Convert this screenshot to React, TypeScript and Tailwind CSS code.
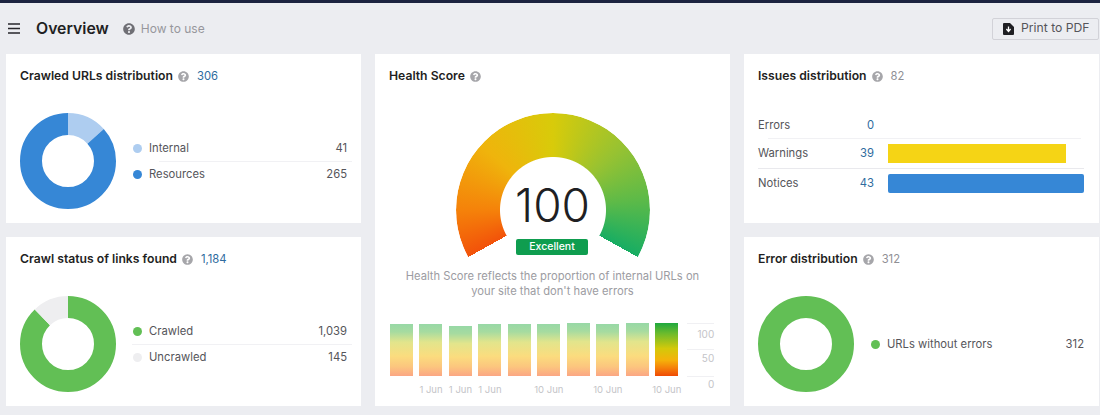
import { FaQuestionCircle } from 'react-icons/fa';

const font = "font-['Inter','Liberation_Sans',sans-serif]";

function Gauge() {
  return (
    <div className="h-[146px] w-[194px] overflow-hidden">
      <div className="h-[194px] w-[194px] rounded-full bg-[conic-gradient(from_241deg,#f2520a_0deg,#f5820a_29deg,#efb40c_71deg,#d8cb0a_119deg,#96c232_167deg,#5dba48_202deg,#17ad63_238deg,transparent_238deg)] [mask-image:radial-gradient(circle_closest-side,transparent_52.5px,black_53.5px)]" />
    </div>
  );
}

function Donut({ parts }: { parts: { color: string; value: number }[] }) {
  let offset = 0;
  return (
    <svg width="96" height="96" viewBox="0 0 96 96" className="shrink-0 -rotate-90">
      {parts.map((p) => {
        const el = (
          <circle
            key={p.color}
            cx="48"
            cy="48"
            r="37"
            fill="none"
            stroke={p.color}
            strokeWidth="22"
            pathLength={100}
            strokeDasharray={`${p.value} ${100 - p.value}`}
            strokeDashoffset={-offset}
          />
        );
        offset += p.value;
        return el;
      })}
    </svg>
  );
}

function Title({ text, count, blue }: { text: string; count?: string; blue?: boolean }) {
  return (
    <div className="flex h-4 items-center">
      <span className="text-[12.2px] font-semibold text-[#1f1f23]">{text}</span>
      <FaQuestionCircle className="ml-[5px] text-[11px] text-[#a6a6aa]" />
      {count && (
        <span className={`ml-[8px] text-[11.25px] ${blue ? 'text-[#2f6b9e]' : 'text-[#8f8f95]'}`}>{count}</span>
      )}
    </div>
  );
}

function LegendRow({ color, label, value, divider }: { color: string; label: string; value: string; divider?: string }) {
  return (
    <>
      <div className="flex h-[25px] items-center pr-[5px] text-[11.25px] text-[#55555a]">
        <span className={`ml-[1px] h-[9px] w-[9px] rounded-full ${color}`} />
        <span className="ml-[7px]">{label}</span>
        <span className="ml-auto">{value}</span>
      </div>
      {divider !== undefined && <div className={`h-px bg-[#f1f1f4] ${divider}`} />}
    </>
  );
}

function DonutCard({ children, title, parts }: { children: React.ReactNode; title: React.ReactNode; parts: { color: string; value: number }[] }) {
  return (
    <section className="h-[169px] bg-white pl-[14px] pr-[9px] pt-[14px]">
      {title}
      <div className="mt-[29px] flex items-center gap-[16px]">
        <Donut parts={parts} />
        <div className="flex-1">{children}</div>
      </div>
    </section>
  );
}

const bars = [
  { h: 'h-[52px]', label: '' },
  { h: 'h-[52px]', label: '1 Jun' },
  { h: 'h-[50px]', label: '1 Jun' },
  { h: 'h-[52px]', label: '1 Jun' },
  { h: 'h-[52px]', label: '' },
  { h: 'h-[52px]', label: '10 Jun' },
  { h: 'h-[53px]', label: '' },
  { h: 'h-[52px]', label: '10 Jun' },
  { h: 'h-[53px]', label: '' },
];

function ScoreChart() {
  const fade = 'bg-[linear-gradient(to_bottom,#97d8a6_0%,#a6dba0_15%,#e2e58c_35%,#fbdc7e_62%,#fcc67e_82%,#fba684_100%)]';
  return (
    <div className="mt-[24px] flex pl-[15px]">
      <div className="flex gap-[6.48px]">
        {bars.map((b, i) => (
          <div key={i} className="flex w-[23px] flex-col items-center">
            <div className="flex h-[53px] w-full items-end">
              <div className={`w-full ${b.h} ${fade}`} />
            </div>
            <span className="mt-[7px] h-[14px] whitespace-nowrap text-[9.5px] leading-[14px] text-[#c4c4c8]">{b.label}</span>
          </div>
        ))}
        <div className="flex w-[23px] flex-col items-center">
          <div className="h-[53px] w-full bg-[linear-gradient(to_bottom,#1fa83f_0%,#6dbb2c_20%,#d3c90a_48%,#f5b20a_70%,#f5800a_85%,#ef4a05_100%)]" />
          <span className="mt-[7px] h-[14px] whitespace-nowrap text-[9.5px] leading-[14px] text-[#c4c4c8]">10 Jun</span>
        </div>
      </div>
      <div className="ml-[9px] w-[27px] text-right text-[10px] leading-[14px] text-[#c4c4c8]">
        <div className="h-[26px] border-t border-[#f0f0f3] pt-[3px]">100</div>
        <div className="h-[27px] border-t border-[#f0f0f3] pt-[1px]">50</div>
        <div className="border-t border-[#f0f0f3]">0</div>
      </div>
    </div>
  );
}

function IssueRow({ label, value, bar, tall }: { label: string; value: string; bar?: string; tall?: boolean }) {
  return (
    <div className={`flex items-center text-[11.25px] ${tall ? 'h-[29px]' : 'h-[26px]'}`}>
      <span className="w-[70px] text-[#55555a]">{label}</span>
      <span className="w-[46px] text-right text-[#2f6b9e]">{value}</span>
      {bar && <div className={`ml-[14px] h-[19px] ${bar}`} />}
    </div>
  );
}

export default function App() {
  return (
    <div className={`h-[415px] w-[1100px] overflow-hidden bg-[#ecedf1] ${font}`}>
      <div className="h-[3px] bg-[#1c2340]" />
      <header className="flex h-[51px] items-center pl-2 pr-[1px]">
        <svg width="12" height="11" viewBox="0 0 12 11" className="shrink-0">
          <path d="M0 1h12M0 5.5h12M0 10h12" stroke="#26262b" strokeWidth="1.6" />
        </svg>
        <h1 className="ml-4 text-[15.8px] font-semibold text-[#1f1f23]">Overview</h1>
        <FaQuestionCircle className="ml-[14px] text-[12px] text-[#6f6f75]" />
        <span className="ml-[6px] text-[12px] text-[#97979d]">How to use</span>
        <button className="ml-auto flex h-[22px] w-[107px] items-center rounded-[2px] border border-[#d2d2d8] pl-[10px] text-[12.2px] text-[#55555a]">
          <svg width="11" height="12" viewBox="0 0 11 12" className="shrink-0">
            <path d="M1 0h6l4 4v7a1 1 0 0 1-1 1H1a1 1 0 0 1-1-1V1a1 1 0 0 1 1-1z" fill="#1f1f23" />
            <path d="M5.5 3.5v4.2M3.4 6l2.1 2.4L7.6 6" fill="none" stroke="#fff" strokeWidth="1.3" />
          </svg>
          <span className="ml-[7px]">Print to PDF</span>
        </button>
      </header>

      <main className="grid grid-cols-[355px_355px_355px] grid-rows-[169px_169px] gap-[14px] pl-[6px]">
        <DonutCard
          title={<Title text="Crawled URLs distribution" count="306" blue />}
          parts={[
            { color: '#aecdf0', value: 13.4 },
            { color: '#3687d6', value: 86.6 },
          ]}
        >
          <LegendRow color="bg-[#aecdf0]" label="Internal" value="41" divider="ml-[27px]" />
          <LegendRow color="bg-[#3687d6]" label="Resources" value="265" />
        </DonutCard>

        <section className="row-span-2 bg-white pt-[14px]">
          <div className="pl-[14px]">
            <Title text="Health Score" />
          </div>
          <div className="relative mt-[29px] flex justify-center">
            <Gauge />
            <div className="absolute left-0 right-0 top-[64px] text-center text-[46px] font-light leading-[56px] text-[#1f1f23]">100</div>
            <div className="absolute left-[141px] top-[126px] flex h-4 w-[72px] items-center justify-center rounded-[2px] bg-[#0f9d4f] text-[10.5px] font-medium text-white">Excellent</div>
          </div>
          <p className="mt-[10px] text-center text-[11.2px] leading-[15px] text-[#9c9ca2]">
            Health Score reflects the proportion of internal URLs on
            <br />
            your site that don't have errors
          </p>
          <ScoreChart />
        </section>

        <section className="bg-white pl-[14px] pr-[15px] pt-[14px]">
          <Title text="Issues distribution" count="82" />
          <div className="mt-[28px]">
            <IssueRow label="Errors" value="0" />
            <div className="ml-[10px] mr-[3px] h-px bg-[#f1f1f4]" />
            <IssueRow label="Warnings" value="39" tall bar="w-[178px] bg-[#f5d415]" />
            <div className="h-px bg-[#e9e9ed]" />
            <IssueRow label="Notices" value="43" tall bar="w-[196px] rounded-[2px] bg-[#3687d6]" />
          </div>
        </section>

        <DonutCard
          title={<Title text="Crawl status of links found" count="1,184" blue />}
          parts={[
            { color: '#62bf55', value: 87.8 },
            { color: '#eeeef0', value: 12.2 },
          ]}
        >
          <LegendRow color="bg-[#62bf55]" label="Crawled" value="1,039" divider="" />
          <LegendRow color="bg-[#eeeef0]" label="Uncrawled" value="145" />
        </DonutCard>

        <DonutCard
          title={<Title text="Error distribution" count="312" />}
          parts={[{ color: '#62bf55', value: 100 }]}
        >
          <div className="pr-[1px]">
            <LegendRow color="bg-[#62bf55]" label="URLs without errors" value="312" />
          </div>
        </DonutCard>
      </main>
    </div>
  );
}
